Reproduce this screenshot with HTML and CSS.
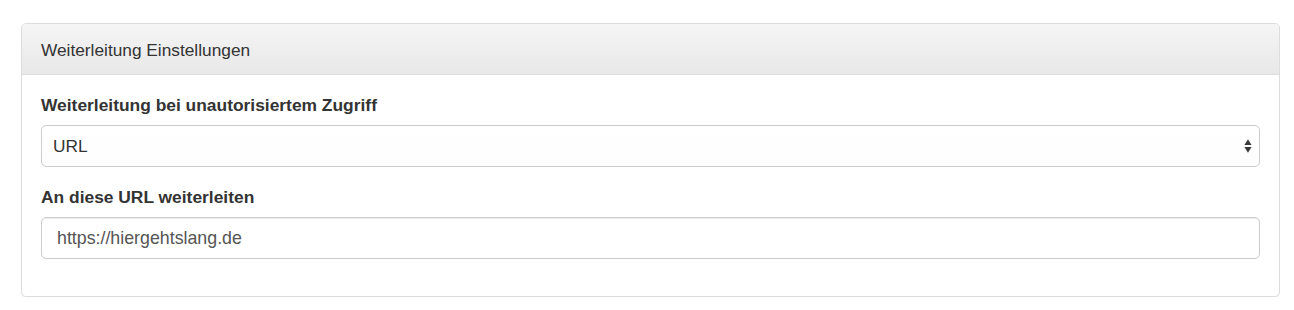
FILE: index.html
```html
<!DOCTYPE html>
<html lang="de">
<head>
<meta charset="utf-8">
<title>Weiterleitung Einstellungen</title>
<link rel="stylesheet" href="styles.css">
</head>
<body>
<div class="page">
  <section class="panel">
    <div class="panel-heading">Weiterleitung Einstellungen</div>
    <div class="panel-body">
      <div class="form-group">
        <label class="control-label" for="mode">Weiterleitung bei unautorisiertem Zugriff</label>
        <div class="select-wrap">
          <select id="mode" class="form-control">
            <option>URL</option>
          </select>
          <svg class="select-arrows" width="8" height="16" viewBox="0 0 8 16" aria-hidden="true">
            <path d="M4 1.2 L7.6 7 L0.4 7 Z" fill="#3a3a3a"/>
            <path d="M0.4 9 L7.6 9 L4 14.8 Z" fill="#3a3a3a"/>
          </svg>
        </div>
      </div>
      <div class="form-group">
        <label class="control-label" for="url">An diese URL weiterleiten</label>
        <input id="url" class="form-control" type="text" value="https://hiergehtslang.de">
      </div>
    </div>
  </section>
</div>
</body>
</html>
```
FILE: styles.css
```css
html, body {
  margin: 0;
  padding: 0;
  background: #ffffff;
}

body {
  font-family: "Liberation Sans", Arial, Helvetica, sans-serif;
  font-size: 17.3px;
  line-height: 24px;
  color: #333333;
}

.page {
  padding: 23px 14px 0 21px;
}

.panel {
  border: 1px solid #dddddd;
  border-radius: 5px;
  background: #ffffff;
  box-shadow: 0 1px 1px rgba(0, 0, 0, 0.05);
}

.panel-heading {
  padding: 14px 19px 12px;
  background: linear-gradient(to bottom, #f5f5f5 0%, #e8e8e8 100%);
  border-bottom: 1px solid #dddddd;
  border-radius: 4px 4px 0 0;
  color: #333333;
}

.panel-body {
  padding: 18px 19px 19px;
}

.form-group {
  display: flex;
  flex-direction: column;
  margin-bottom: 18px;
}

.control-label {
  display: block;
  font-size: 17.4px;
  line-height: 25px;
  font-weight: bold;
  margin-bottom: 7px;
}

.form-control {
  display: block;
  box-sizing: border-box;
  width: 100%;
  height: 42px;
  margin: 0;
  padding: 0 15px;
  font-family: inherit;
  font-size: 17.8px;
  color: #555555;
  background: #ffffff;
  border: 1px solid #cccccc;
  border-radius: 5px;
  box-shadow: inset 0 1px 1px rgba(0, 0, 0, 0.075);
  outline: none;
}

select.form-control {
  -webkit-appearance: none;
  appearance: none;
  padding-left: 11px;
  font-size: 17.3px;
  color: #333333;
  box-shadow: none;
  background: linear-gradient(to bottom, #ffffff, #fdfdfd);
}

.select-wrap {
  position: relative;
}

.select-arrows {
  position: absolute;
  right: 8px;
  top: 13px;
  pointer-events: none;
}
```
